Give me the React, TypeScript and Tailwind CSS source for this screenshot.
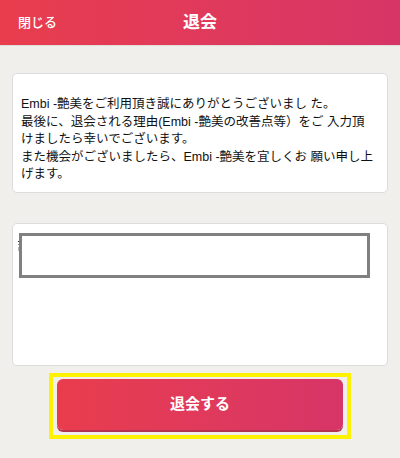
const jp = { fontFamily: '"Liberation Sans", "Noto Sans CJK JP", sans-serif' };

const messageLines = [
  "Embi -艶美をご利用頂き誠にありがとうございまし た。",
  "最後に、退会される理由(Embi -艶美の改善点等）をご 入力頂",
  "けましたら幸いでございます。",
  "また機会がございましたら、Embi -艶美を宜しくお 願い申し上",
  "げます。",
];

export default function App() {
  return (
    <div className="w-[400px] h-[458px] bg-[#f0efeb] overflow-hidden" style={jp}>
      {/* Header */}
      <header className="relative h-[46px] bg-gradient-to-r from-[#e93d4d] to-[#d73567] border-b border-[#dde0da] flex items-center justify-center">
        <button className="absolute left-[18px] top-[14px] text-[13px] text-white font-medium leading-[18px]">
          閉じる
        </button>
        <h1 className="text-[17px] font-bold text-white leading-none">退会</h1>
      </header>

      {/* Message */}
      <div className="mx-[12px] mt-[27px] h-[120px] bg-white border border-[#dcdcdc] rounded-[5px] pl-[8px] pt-[22px]">
        {messageLines.map((line, i) => (
          <p key={i} className="text-[12.5px] leading-[17.5px] text-[#111] whitespace-nowrap">
            {line}
          </p>
        ))}
      </div>

      {/* Reason input */}
      <div className="mx-[12px] mt-[30px] h-[143px] bg-white border border-[#dcdcdc] rounded-[5px] pl-[5px] pt-[9px] flex items-start">
        <div className="flex flex-col gap-[2px] mt-[8px] w-[1px]">
          <span className="block w-[2px] h-[1px] bg-[#222]" />
          <span className="block w-[1px] h-[1px] bg-[#999]" />
          <span className="block w-[1px] h-[4px] bg-[#bbb]" />
        </div>
        <textarea className="w-[351px] h-[45px] border-[3px] border-[#808080] bg-white resize-none outline-none" />
      </div>

      {/* Submit */}
      <div className="flex justify-center mt-[7px]">
        <div className="border-[4px] border-[#fff200] pt-[2px] pb-[5px] px-[4px]">
          <button className="w-[286px] h-[51px] rounded-[6px] bg-gradient-to-r from-[#e93d4d] to-[#d73567] shadow-[0_2px_0_#b3344f] text-white text-[15px] font-bold">
            退会する
          </button>
        </div>
      </div>
    </div>
  );
}
